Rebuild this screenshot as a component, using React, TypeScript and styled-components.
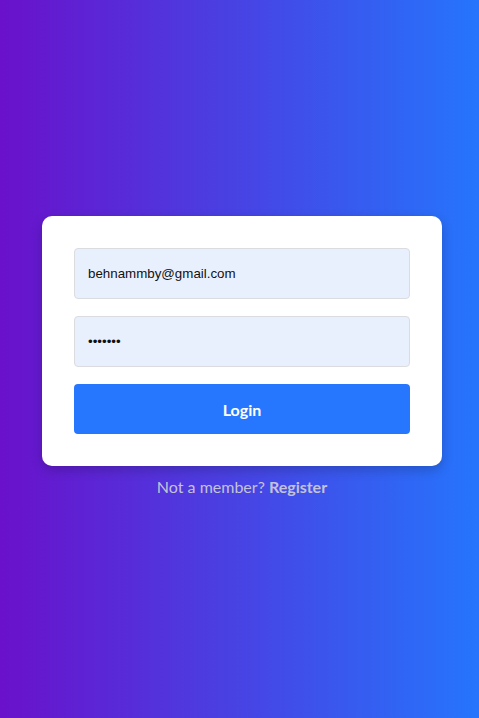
import React from 'react'
import styled, { createGlobalStyle } from 'styled-components'

const GlobalStyle = createGlobalStyle`
   html, body {
      margin: 0;
      padding: 0;
   }
   body {
      font-family: Lato, "Open Sans", sans-serif;
   }
`

const App = () => {
   return (
      <>
         <GlobalStyle />
         <Page>
            <Card>
               <Input type="email" defaultValue="behnammby@gmail.com" />
               <Input type="password" defaultValue="1234567" />
               <LoginButton>Login</LoginButton>
            </Card>
            <Footer>
               Not a member? <strong>Register</strong>
            </Footer>
         </Page>
      </>
   )
}

const Page = styled.main`
   min-height: 100vh;
   display: flex;
   flex-direction: column;
   align-items: center;
   justify-content: center;
   background: linear-gradient(to right, #6a11cb, #2575fc);
   padding: 0 0 6px 5px;
   box-sizing: border-box;
`

const Card = styled.form`
   width: 400px;
   box-sizing: border-box;
   padding: 32px;
   background-color: #fff;
   border-radius: 10px;
   box-shadow: 0 4px 12px rgba(0, 0, 0, 0.2);
   display: flex;
   flex-direction: column;
   gap: 17px;
`

const Input = styled.input`
   height: 51px;
   box-sizing: border-box;
   padding: 0 13px;
   border: 1px solid #dadce0;
   border-radius: 4px;
   background-color: #e8f0fe;
   font-family: "Liberation Sans", Arial, sans-serif;
   font-size: 13.33px;
   color: #111;
   outline: none;
`

const LoginButton = styled.button`
   height: 50px;
   border: none;
   border-radius: 4px;
   background-color: #2777fe;
   color: #fff;
   font-family: Lato, sans-serif;
   font-weight: 700;
   font-size: 16px;
   cursor: pointer;
`

const Footer = styled.p`
   margin: 11px 0 0;
   font-size: 16px;
   color: #c4c2d8;
   strong {
      font-weight: 700;
   }
`

export default App
